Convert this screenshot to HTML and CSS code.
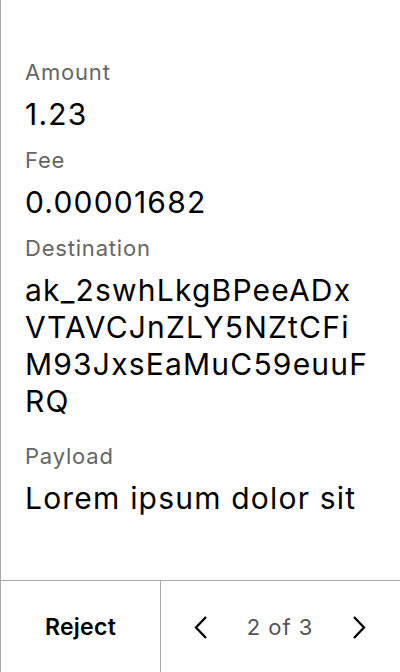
FILE: index.html
```html
<!DOCTYPE html>
<html>
<head>
<meta charset="utf-8">
<link rel="stylesheet" href="styles.css">
</head>
<body>
<div class="screen">
  <div class="details">
    <div class="field">
      <div class="label">Amount</div>
      <div class="value">1.23</div>
    </div>
    <div class="field">
      <div class="label">Fee</div>
      <div class="value">0.00001682</div>
    </div>
    <div class="field field-long">
      <div class="label">Destination</div>
      <div class="value">ak_2swhLkgBPeeADx<br>VTAVCJnZLY5NZtCFi<br>M93JxsEaMuC59euuF<br>RQ</div>
    </div>
    <div class="field">
      <div class="label">Payload</div>
      <div class="value">Lorem ipsum dolor sit</div>
    </div>
  </div>
  <div class="footer">
    <div class="reject">Reject</div>
    <div class="pager">
      <svg class="chev" width="18" height="28" viewBox="0 0 18 28"><path d="M15 4 L5 14.5 L15 25" fill="none" stroke="#000" stroke-width="2.3"/></svg>
      <span class="count">2 of 3</span>
      <svg class="chev" width="18" height="28" viewBox="0 0 18 28"><path d="M3 4 L13 14.5 L3 25" fill="none" stroke="#000" stroke-width="2.3"/></svg>
    </div>
  </div>
</div>
</body>
</html>
```
FILE: styles.css
```css
html, body {
  margin: 0;
  padding: 0;
  background: #fff;
}
body {
  font-family: Inter, "Noto Sans", sans-serif;
  color: #000;
}
.screen {
  width: 400px;
  height: 672px;
  box-sizing: border-box;
  border-left: 1px solid #aaa;
  display: flex;
  flex-direction: column;
}
.details {
  flex: 1;
  padding: 60px 8px 0 24px;
}
.field {
  margin-bottom: 15px;
}
.field-long {
  margin-bottom: 24px;
}
.label {
  font-size: 22px;
  line-height: 24px;
  letter-spacing: 0.8px;
  color: #666;
  margin-bottom: 12px;
}
.value {
  font-size: 30px;
  line-height: 37px;
  letter-spacing: 1.2px;
  white-space: nowrap;
}
.footer {
  height: 91px;
  border-top: 1px solid #aaa;
  display: flex;
}
.reject {
  width: 159px;
  border-right: 1px solid #aaa;
  display: flex;
  align-items: center;
  justify-content: center;
  font-size: 23px;
  font-weight: 600;
  letter-spacing: 0.3px;
}
.pager {
  flex: 1;
  display: flex;
  align-items: center;
  justify-content: space-between;
  padding: 0 31px 0 30px;
}
.count {
  font-size: 22px;
  letter-spacing: 1px;
  color: #555;
}
```
